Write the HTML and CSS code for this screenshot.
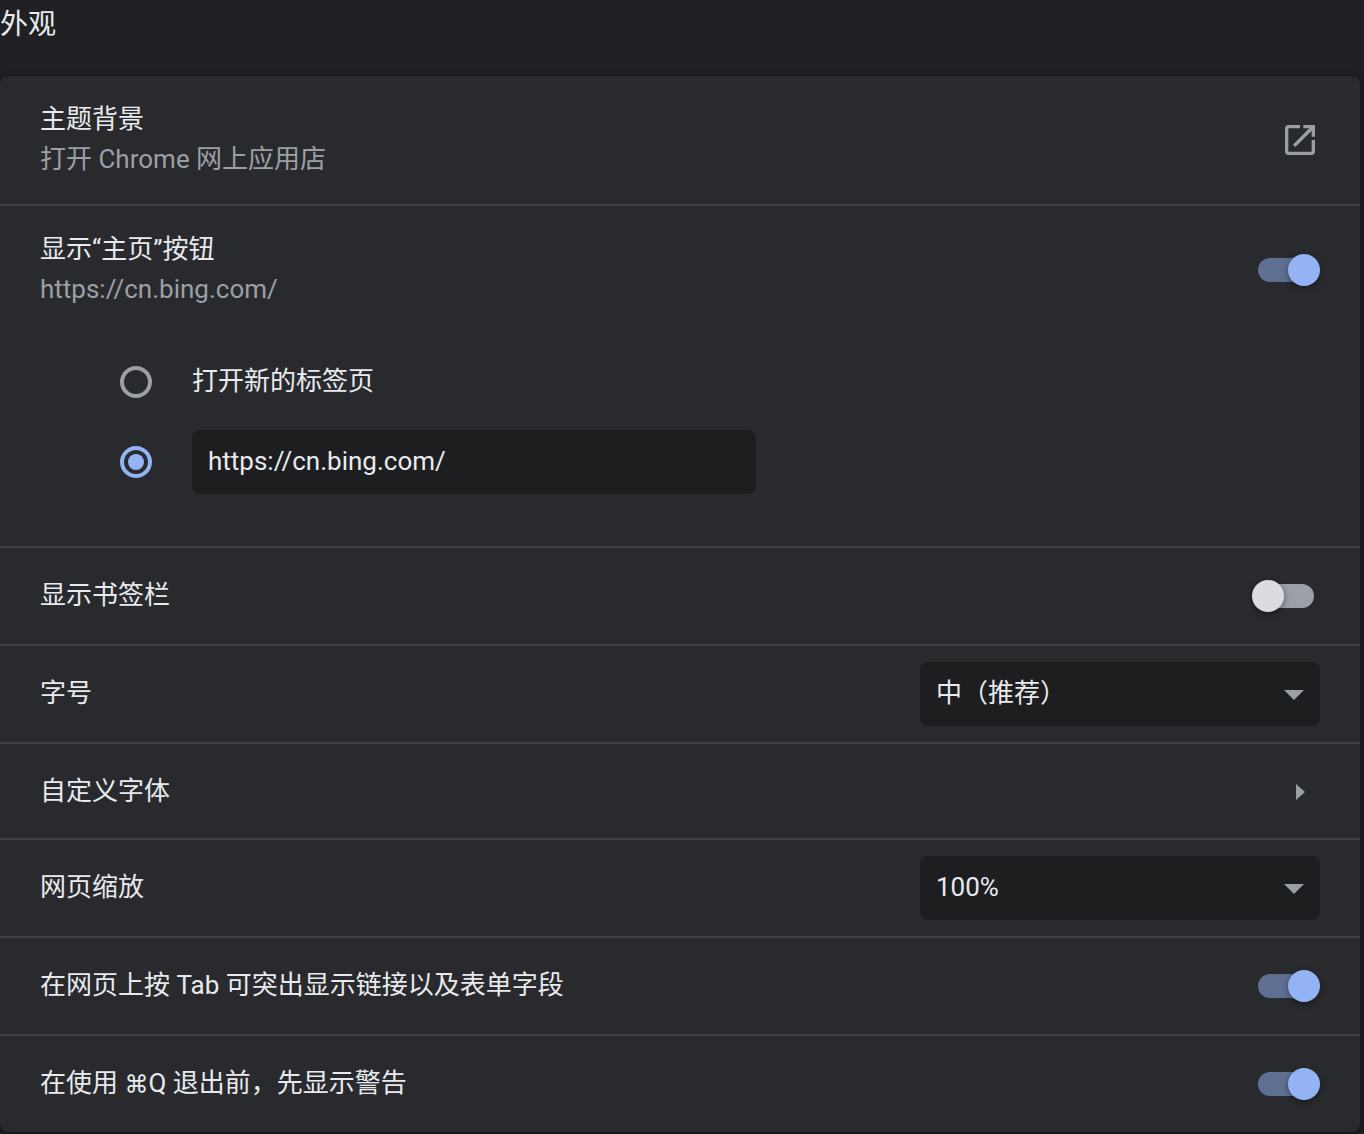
FILE: index.html
```html
<!DOCTYPE html>
<html lang="zh-CN">
<head>
<title>设置 - 外观</title>
<meta charset="utf-8" />
<meta name="viewport" content="width=device-width, initial-scale=1" />
<link rel="stylesheet" href="styles.css">
</head>
<body>
<h1>外观</h1>
<main class="card">
	<div class="row two-line">
		<div class="label">
			<div>主题背景</div>
			<div class="secondary">打开 Chrome 网上应用店</div>
		</div>
		<button class="icon-button" type="button" aria-label="打开 Chrome 网上应用店">
			<svg viewBox="0 0 24 24"><path d="M19 19H5V5h7V3H5c-1.11 0-2 .9-2 2v14c0 1.1.89 2 2 2h14c1.1 0 2-.9 2-2v-7h-2v7zM14 3v2h3.59l-9.83 9.83 1.41 1.41L19 6.41V10h2V3h-7z"/></svg>
		</button>
	</div>

	<div class="row two-line">
		<label class="label" for="home-button">
			<div>显示“主页”按钮</div>
			<div class="secondary">https://cn.bing.com/</div>
		</label>
		<input class="toggle" id="home-button" type="checkbox" checked>
	</div>
	<div class="options">
		<div class="option">
			<input type="radio" name="home" id="home-ntp">
			<label class="label" for="home-ntp">打开新的标签页</label>
		</div>
		<div class="option">
			<input type="radio" name="home" id="home-url" aria-label="自定义网址" checked>
			<input class="field" type="text" value="https://cn.bing.com/" aria-label="网址" spellcheck="false">
		</div>
	</div>

	<div class="row">
		<label class="label" for="bookmarks">显示书签栏</label>
		<input class="toggle" id="bookmarks" type="checkbox">
	</div>

	<div class="row">
		<label class="label" for="font-size">字号</label>
		<div class="select">
			<select class="field" id="font-size">
				<option>极小</option>
				<option>小</option>
				<option selected>中（推荐）</option>
				<option>大</option>
				<option>极大</option>
			</select>
			<svg viewBox="0 0 20 10"><path d="M0 0h20L10 10z"/></svg>
		</div>
	</div>

	<div class="row link-row">
		<div class="label" id="fonts">自定义字体</div>
		<button class="icon-button" type="button" aria-labelledby="fonts">
			<svg viewBox="0 0 40 40"><path d="M16 12v16l9-8z"/></svg>
		</button>
	</div>

	<div class="row">
		<label class="label" for="zoom">网页缩放</label>
		<div class="select">
			<select class="field" id="zoom">
				<option>75%</option>
				<option>90%</option>
				<option selected>100%</option>
				<option>125%</option>
				<option>150%</option>
			</select>
			<svg viewBox="0 0 20 10"><path d="M0 0h20L10 10z"/></svg>
		</div>
	</div>

	<div class="row">
		<label class="label" for="tab-links">在网页上按 Tab 可突出显示链接以及表单字段</label>
		<input class="toggle" id="tab-links" type="checkbox" checked>
	</div>

	<div class="row">
		<label class="label" for="quit-warning">在使用 <span class="key">⌘</span>Q 退出前，先显示警告</label>
		<input class="toggle" id="quit-warning" type="checkbox" checked>
	</div>
</main>
</body>
</html>
```
FILE: styles.css
```css
* {
	box-sizing: border-box;
}
body {
	margin: 0;
	padding: 0 4px 2px 0;
	background: #202124;
	color: #e8eaed;
	font-family: Roboto, "Noto Sans CJK SC", sans-serif;
	font-size: 26px;
	line-height: 40px;
}
h1 {
	margin: 0;
	padding: 5px 0 31px;
	font-size: 28px;
	font-weight: 400;
}
.card {
	background: #292a2d;
	border-radius: 8px;
	box-shadow: 0 2px 4px rgba(0, 0, 0, .3), 0 2px 12px 4px rgba(0, 0, 0, .15);
}

/* rows */
.row {
	display: flex;
	align-items: center;
	min-height: 98px;
	padding: 0 40px;
	border-top: 2px solid #3f4042;
}
.row:first-child {
	border-top: none;
	min-height: 128px;
}
.two-line {
	min-height: 130px;
}
.link-row {
	min-height: 96px;
	padding-top: 2px;
}
.label {
	flex: 1;
	padding-bottom: 2px;
}
.secondary {
	color: #9aa0a6;
}
.key {
	font-family: Inter, sans-serif;
	font-size: 24px;
	line-height: 1;
}

/* radio options under the home button row */
.options {
	padding: 8px 40px 44px 120px;
}
.option {
	display: flex;
	align-items: center;
	gap: 40px;
	min-height: 80px;
}
input[type=radio] {
	appearance: none;
	display: grid;
	place-items: center;
	width: 32px;
	height: 32px;
	margin: 0;
	border: 4px solid #9aa0a6;
	border-radius: 50%;
}
input[type=radio]:checked {
	border-color: #94b3f4;
}
input[type=radio]:checked::before {
	content: "";
	width: 16px;
	height: 16px;
	border-radius: 50%;
	background: #94b3f4;
}

/* text box and drop-downs */
.field {
	appearance: none;
	height: 64px;
	padding: 0 16px 2px;
	border: none;
	border-radius: 8px;
	outline: none;
	background: #1d1e20;
	color: inherit;
	font: inherit;
}
input.field {
	width: 564px;
}
.select {
	position: relative;
	width: 400px;
}
.select .field {
	width: 100%;
}
.select svg {
	position: absolute;
	top: 28px;
	right: 16px;
	width: 20px;
	height: 10px;
	pointer-events: none;
}
svg {
	display: block;
	fill: #9aa0a6;
}
.icon-button {
	width: 40px;
	height: 40px;
	padding: 0;
	border: none;
	background: none;
}

/* toggle switch */
.toggle {
	appearance: none;
	position: relative;
	width: 68px;
	height: 32px;
	margin: 0;
}
.toggle::before {
	content: "";
	position: absolute;
	top: 4px;
	left: 6px;
	width: 56px;
	height: 24px;
	border-radius: 12px;
	background: #9aa0a6;
}
.toggle::after {
	content: "";
	position: absolute;
	top: 0;
	left: 0;
	width: 32px;
	height: 32px;
	border-radius: 50%;
	background: #dadce0;
	box-shadow: 0 2px 6px rgba(0, 0, 0, .4);
}
.toggle:checked::before {
	background: #5f6f92;
}
.toggle:checked::after {
	left: 36px;
	background: #94b3f4;
}
```
